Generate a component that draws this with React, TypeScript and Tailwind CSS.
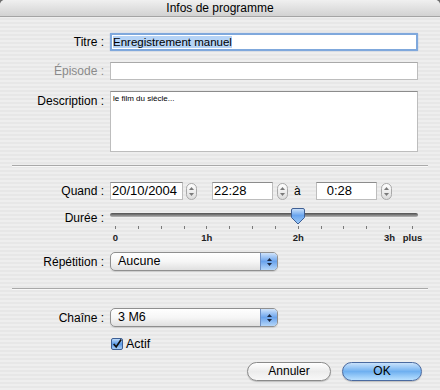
import type { ReactNode } from "react";

const TICKS = Array.from({ length: 14 }, (_, i) => i);
const TICK_LABELS: Record<number, string> = { 0: "0", 4: "1h", 8: "2h", 12: "3h", 13: "plus" };

function Row({ label, muted, top, children }: { label: string; muted?: boolean; top?: boolean; children: ReactNode }) {
  return (
    <div className={`flex ${top ? "items-start" : "items-center"}`}>
      <div
        className={`w-[104px] shrink-0 text-right text-[12px] leading-[14px] ${top ? "pt-[3px]" : ""} ${
          muted ? "text-[#8a8a8a]" : "text-black"
        }`}
      >
        {label}
      </div>
      <div className="ml-[6px] flex items-center">{children}</div>
    </div>
  );
}

function Arrows({ color = "#555" }: { color?: string }) {
  return (
    <>
      <svg width="5" height="3" viewBox="0 0 5 3">
        <path d="M2.5 0 L5 3 H0 Z" fill={color} />
      </svg>
      <svg width="5" height="3" viewBox="0 0 5 3">
        <path d="M0 0 H5 L2.5 3 Z" fill={color} />
      </svg>
    </>
  );
}

function Stepper() {
  return (
    <div className="flex h-[17px] w-[11px] flex-col items-center justify-center gap-[3px] rounded-full border border-[#a9a9a9] bg-gradient-to-b from-white to-[#dcdcdc]">
      <Arrows color="#7a7a7a" />
    </div>
  );
}

function Popup({ value }: { value: string }) {
  return (
    <div className="flex h-[19px] w-[168px] items-stretch overflow-hidden rounded-[5px] border border-[#8f8f8f] bg-gradient-to-b from-white via-[#f6f6f6] to-[#e0e0e0] shadow-[0_1px_1px_rgba(0,0,0,0.12)]">
      <span className="flex-1 pl-[7px] text-[12.5px] leading-[17px] text-black">{value}</span>
      <span className="flex w-[17px] flex-col items-center justify-center gap-[2px] border-l border-[#6d8fc4] bg-gradient-to-b from-[#cfe3fa] via-[#6aa3ec] to-[#b5d6f8]">
        <Arrows color="#1c2a44" />
      </span>
    </div>
  );
}

function Field({ className, children }: { className: string; children?: ReactNode }) {
  return (
    <div
      className={`border border-[#bdbdbd] border-t-[#8c8c8c] bg-white ${className}`}
    >
      {children}
    </div>
  );
}

function AquaButton({ label, primary }: { label: string; primary?: boolean }) {
  return (
    <button
      className={`h-[19px] rounded-full border text-[12px] leading-[17px] text-black shadow-[0_1px_1px_rgba(0,0,0,0.2)] ${
        primary
          ? "w-[80px] border-[#4a6aa0] bg-gradient-to-b from-[#c9e2fb] via-[#6fb0f0] to-[#b8e0ff]"
          : "w-[84px] border-[#8a8a8a] bg-gradient-to-b from-white via-[#ececec] to-[#f8f8f8]"
      }`}
    >
      {label}
    </button>
  );
}

function Separator() {
  return <div className="mx-[12px] h-[2px] border-t border-[#a9a9a9] border-b border-b-[#f8f8f8]" />;
}

function DurationSlider() {
  return (
    <div className="relative h-[34px] w-[308px]">
      <div className="pt-[5px]">
        <div className="h-[4px] rounded-full bg-gradient-to-b from-[#4f4f4f] via-[#7d7d7d] to-[#b9b9b9]" />
      </div>
      <div className="mt-[9px] flex justify-between px-[5px]">
        {TICKS.map((t) => (
          <div key={t} className="flex w-px flex-col items-center">
            <div className="h-[3px] w-px bg-[#7a7a7a]" />
            <div className="mt-[3px] whitespace-nowrap text-[9.5px] font-bold leading-[11px] text-[#222]">
              {TICK_LABELS[t] ?? "\u00a0"}
            </div>
          </div>
        ))}
      </div>
      <svg className="absolute left-[181px] top-0" width="14" height="17" viewBox="0 0 14 17">
        <defs>
          <linearGradient id="thumb" x1="0" y1="0" x2="0" y2="1">
            <stop offset="0" stopColor="#cfe4fb" />
            <stop offset="0.45" stopColor="#6aa5ee" />
            <stop offset="1" stopColor="#9fcaf6" />
          </linearGradient>
        </defs>
        <path
          d="M2 0.5 H12 Q13.5 0.5 13.5 2 V9.5 L7 16 L0.5 9.5 V2 Q0.5 0.5 2 0.5 Z"
          fill="url(#thumb)"
          stroke="#3f5f94"
        />
      </svg>
    </div>
  );
}

export default function App() {
  return (
    <div className="h-[390px] w-[440px] overflow-hidden bg-[#6e6e6e] font-['Liberation_Sans',Arial,sans-serif]">
      <div className="flex h-full flex-col rounded-t-[5px] bg-[repeating-linear-gradient(180deg,#eeeeee_0px,#eeeeee_2px,#e7e7e7_2px,#e7e7e7_4px)]">
        <div className="flex h-[17px] items-center justify-center rounded-t-[5px] border-b border-[#a4a4a4] bg-gradient-to-b from-[#f0f0f0] to-[#d2d2d2] text-[12px] text-black">
          Infos de programme
        </div>

        <div className="mt-[16px]">
          <Row label="Titre :">
            <div className="h-[18px] w-[308px] rounded-[1px] border-[2px] border-[#7fa8dc] bg-white shadow-[0_0_1px_#5a86c8]">
              <div className="pl-[1px] text-[11.5px] leading-[14px] text-black">
                <span className="bg-[#b5d3f6]">Enregistrement manuel</span>
              </div>
            </div>
          </Row>
        </div>

        <div className="mt-[11px]">
          <Row label="Épisode :" muted>
            <Field className="h-[18px] w-[308px] border-t-[#a9a9a9]" />
          </Row>
        </div>

        <div className="mt-[11px]">
          <Row label="Description :" top>
            <Field className="h-[61px] w-[308px] px-[2px] pt-[2px] text-[8px] leading-[10px] text-black">
              le film du siècle...
            </Field>
          </Row>
        </div>

        <div className="mt-[13px]">
          <Separator />
        </div>

        <div className="mt-[15px]">
          <Row label="Quand :">
            <Field className="h-[18px] w-[73px] pl-[1px] text-[13px] leading-[16px] text-black">20/10/2004</Field>
            <div className="ml-[3px]">
              <Stepper />
            </div>
            <Field className="ml-[15px] h-[18px] w-[61px] pl-[1px] text-[13px] leading-[16px] text-black">22:28</Field>
            <div className="ml-[4px]">
              <Stepper />
            </div>
            <span className="ml-[6px] text-[12px] text-black">à</span>
            <Field className="ml-[15px] h-[18px] w-[61px] pl-[10px] text-[13px] leading-[16px] text-black">0:28</Field>
            <div className="ml-[4px]">
              <Stepper />
            </div>
          </Row>
        </div>

        <div className="mt-[8px]">
          <Row label="Durée :" top>
            <DurationSlider />
          </Row>
        </div>

        <div className="mt-[10px]">
          <Row label="Répétition :">
            <Popup value="Aucune" />
          </Row>
        </div>

        <div className="mt-[17px]">
          <Separator />
        </div>

        <div className="mt-[18px]">
          <Row label="Chaîne :">
            <Popup value="3 M6" />
          </Row>
        </div>

        <div className="ml-[111px] mt-[10px] flex items-center">
          <div className="flex h-[12px] w-[12px] items-center justify-center rounded-[2px] border border-[#3d5f95] bg-gradient-to-b from-[#bcd9f8] via-[#5b9ae6] to-[#a7cdf5]">
            <svg width="12" height="12" viewBox="0 0 12 12">
              <path d="M2 6 L5 9.5 L11 0.5" fill="none" stroke="#111" strokeWidth="2" />
            </svg>
          </div>
          <span className="ml-[3px] text-[12.5px] leading-[14px] text-black">Actif</span>
        </div>

        <div className="mr-[18px] mt-[11px] flex justify-end gap-[11px]">
          <AquaButton label="Annuler" />
          <AquaButton label="OK" primary />
        </div>
      </div>
    </div>
  );
}
